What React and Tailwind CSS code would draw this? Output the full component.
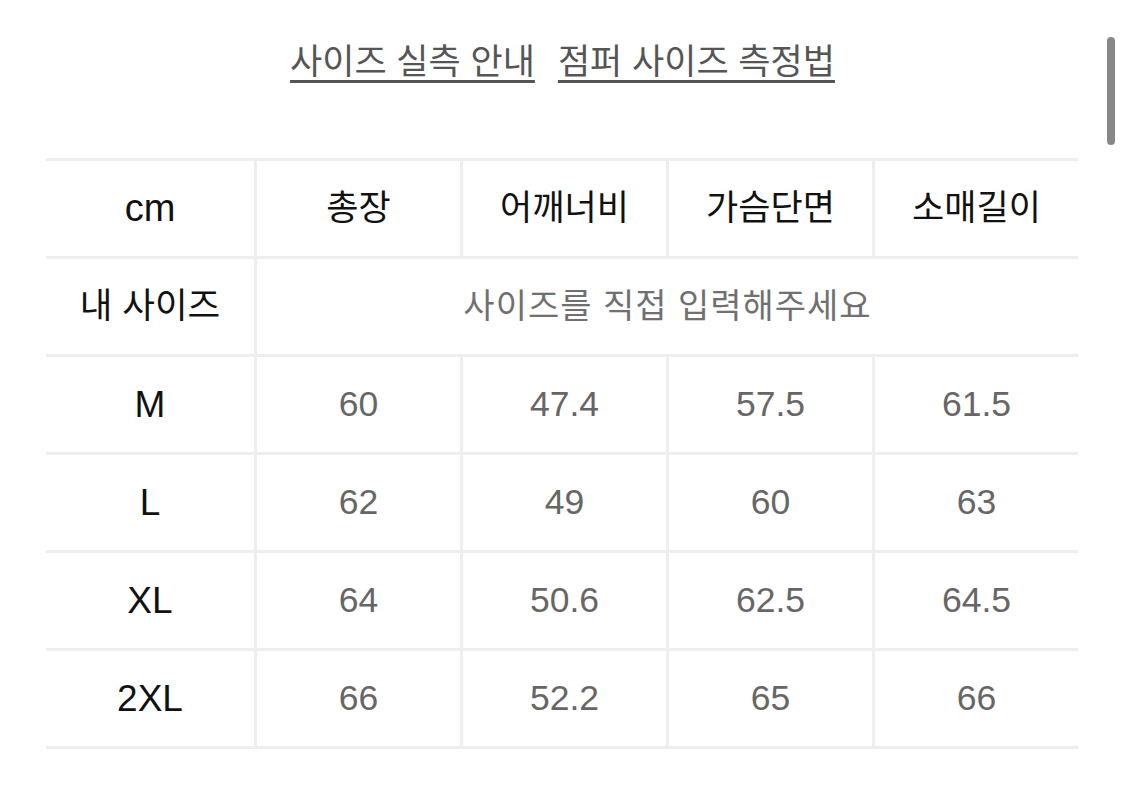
import React from "react";

const FONT = { fontFamily: '"Liberation Sans", "Noto Sans CJK KR", sans-serif' };

const headers = ["총장", "어깨너비", "가슴단면", "소매길이"];
const rows = [
  ["M", "60", "47.4", "57.5", "61.5"],
  ["L", "62", "49", "60", "63"],
  ["XL", "64", "50.6", "62.5", "64.5"],
  ["2XL", "66", "52.2", "65", "66"],
];

export default function App() {
  return (
    <div className="relative w-[1125px] h-[800px] bg-white overflow-hidden" style={FONT}>
      <div className="h-[158px] flex justify-center items-start pt-[40px] gap-[23px] text-[35px] leading-[44px] text-[#555555]">
        <span className="underline decoration-[2.5px] underline-offset-[6px]">사이즈 실측 안내</span>
        <span className="underline decoration-[2.5px] underline-offset-[6px]">점퍼 사이즈 측정법</span>
      </div>

      <div className="ml-[46px] w-[1032px] grid grid-cols-[208px_repeat(4,206px)] border-b-[3px] border-[#eeeeee]">
        <div className="h-[98px] border-t-[3px] border-[#eeeeee] flex items-center justify-center text-[38px] text-[#111111]">
          cm
        </div>
        {headers.map((h) => (
          <div
            key={h}
            className="h-[98px] border-t-[3px] border-l-[3px] border-[#eeeeee] flex items-center justify-center text-[35px] text-[#111111]"
          >
            {h}
          </div>
        ))}

        <div className="h-[98px] border-t-[3px] border-[#eeeeee] flex items-center justify-center text-[35.5px] text-[#111111]">
          내 사이즈
        </div>
        <div className="col-span-4 h-[98px] border-t-[3px] border-l-[3px] border-[#eeeeee] flex items-center justify-center text-[34px] tracking-[1px] text-[#707070]">
          사이즈를 직접 입력해주세요
        </div>

        {rows.map((r) => (
          <React.Fragment key={r[0]}>
            <div className="h-[98px] border-t-[3px] border-[#eeeeee] flex items-center justify-center text-[37px] text-[#111111]">
              {r[0]}
            </div>
            {r.slice(1).map((v, i) => (
              <div
                key={i}
                className="h-[98px] border-t-[3px] border-l-[3px] border-[#eeeeee] flex items-center justify-center text-[35.5px] text-[#666666]"
              >
                {v}
              </div>
            ))}
          </React.Fragment>
        ))}
      </div>

      <div className="absolute left-[1107px] top-[37px] w-[8px] h-[108px] rounded-full bg-[#888888]" />
    </div>
  );
}
